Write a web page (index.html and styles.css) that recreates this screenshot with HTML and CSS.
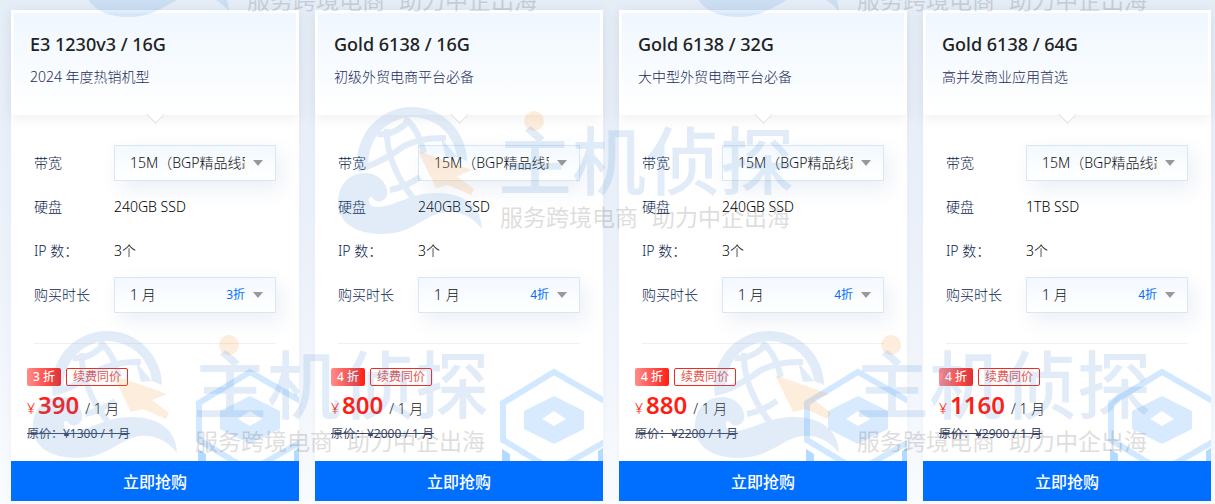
FILE: index.html
```html
<!DOCTYPE html>
<html lang="zh-CN">
<head>
    <meta charset="UTF-8">
    <meta name="viewport" content="width=device-width, initial-scale=1.0">
    <title>服务器特惠</title>
    <link rel="stylesheet" href="styles.css">
</head>
<body>
    <main class="plans" id="plans"></main>
    <div class="marks" id="marks" aria-hidden="true"></div>

    <script>
        const plans = [
            { name: 'E3 1230v3 / 16G', desc: '2024 年度热销机型', disk: '240GB SSD', off: 3, price: 390, old: 1300 },
            { name: 'Gold 6138 / 16G', desc: '初级外贸电商平台必备', disk: '240GB SSD', off: 4, price: 800, old: 2000 },
            { name: 'Gold 6138 / 32G', desc: '大中型外贸电商平台必备', disk: '240GB SSD', off: 4, price: 880, old: 2200 },
            { name: 'Gold 6138 / 64G', desc: '高并发商业应用首选', disk: '1TB SSD', off: 4, price: 1160, old: 2900 }
        ];

        document.getElementById('plans').innerHTML = plans.map((p, i) => `
            <section class="plan">
                <header class="plan-head">
                    <h2>${p.name}</h2>
                    <p>${p.desc}</p>
                </header>
                <div class="plan-body">
                    <div class="row">
                        <label for="band${i}">带宽</label>
                        <div class="select">
                            <select id="band${i}"><option>15M（BGP精品线路）</option></select>
                        </div>
                    </div>
                    <div class="row"><span class="name">硬盘</span><span class="value">${p.disk}</span></div>
                    <div class="row"><span class="name">IP 数：</span><span class="value">3个</span></div>
                    <div class="row">
                        <label for="time${i}">购买时长</label>
                        <div class="select">
                            <select id="time${i}"><option>1 月</option></select>
                            <span class="off">${p.off}折</span>
                        </div>
                    </div>
                </div>
                <div class="plan-price">
                    <svg class="cube" viewBox="0 0 104 93" aria-hidden="true">
                        <path d="M3 81V93H11V86ZM104 80L99 83V93H104Z" fill="#b3dbff"/>
                        <path d="M55 4L109 35V72L55 103L4 72V35Z" fill="none" stroke="#d2e8ff" stroke-width="6"/>
                        <path fill-rule="evenodd" d="M55 28L85 43V61L55 76L25 61V43ZM55 43L43 51L55 58L67 51Z" fill="#d8eafe"/>
                    </svg>
                    <div class="tags"><span class="tag tag-full">${p.off} 折</span><span class="tag">续费同价</span></div>
                    <div class="price"><i>¥</i><b>${p.price}</b><span>/ 1 月</span></div>
                    <del>原价：¥${p.old} / 1 月</del>
                </div>
                <button type="button" class="buy">立即抢购</button>
            </section>
        `).join('');

        // Brand mark: globe on a wave, name and slogan
        const marks = ['a', 'b', 'c', 'd', 'e'];
        document.getElementById('marks').innerHTML = marks.map(m => `
            <svg class="mark mark-${m}" viewBox="0 0 456 130">
                <g class="mark-blue">
                    <path d="M20 65A55 55 0 0 1 74 0A55 55 0 0 1 129 54L119 50A45 45 0 0 0 74 10A45 45 0 0 0 31 62Z"/>
                    <g class="mark-grid">
                        <path d="M40 27C50 28 62 24 72 12"/>
                        <path d="M28 60C44 54 58 45 66 39Q84 30 108 31"/>
                        <path d="M49 22C48 45 58 70 75 91"/>
                        <path d="M67 11C77 20 81 28 86 46"/>
                        <path d="M52 83C62 81 72 77 82 70"/>
                    </g>
                    <path d="M103 31L119 50L108 51Z"/>
                    <path d="M0 96C0 77 12 66 27 66C42 66 51 79 49 88C47 95 38 97 35 91C29 87 30 97 34 99C52 104 68 86 98 86C125 86 143 98 144 122C133 107 116 102 102 106C84 111 72 127 44 127C18 127 0 116 0 96Z"/>
                </g>
                <path class="mark-orange" d="M80 44L134 63L119 69L136 82L133 88L110 78L98 81Z"/>
                <circle class="mark-orange" cx="196" cy="14" r="10"/>
                <text class="mark-name" x="160" y="82">主机侦探</text>
                <text class="mark-slogan" x="162" y="119">服务跨境电商</text>
                <text class="mark-slogan" x="314" y="119">助力中企出海</text>
            </svg>
        `).join('');
    </script>
</body>
</html>
```
FILE: styles.css
```css
* {
    box-sizing: border-box;
}
body {
    position: relative;
    margin: 0;
    overflow-x: hidden;
    font-family: "Noto Sans", "Noto Sans CJK SC", sans-serif;
    font-size: 14px;
    color: #222;
    background: linear-gradient(#e5edf7, #edf2f9 50%, #fafcff);
}
.plans {
    display: grid;
    grid-template-columns: repeat(4, 1fr);
    gap: 16px;
    padding: 10px 4px 3px 11px;
}
.plan {
    display: flex;
    flex-direction: column;
    background: #fff;
    box-shadow: 0 0 12px rgba(120, 150, 210, 0.06);
}
.plan-head {
    position: relative;
    height: 105px;
    padding: 17px 16px;
    border: 3px solid #fff;
    background: linear-gradient(#eff7ff, #fff);
    box-shadow: 0 4px 14px rgba(0, 0, 0, 0.06);
}
.plan-head::after {
    content: "";
    position: absolute;
    left: 50%;
    bottom: -9px;
    width: 12px;
    height: 12px;
    margin-left: -6px;
    background: #fff;
    border: solid #dfe2e6;
    border-width: 0 1px 1px 0;
    transform: rotate(45deg);
}
.plan-head h2 {
    margin: 0;
    font-size: 18px;
    font-weight: 500;
    line-height: 28px;
}
.plan-head p {
    margin: 9px 0 0;
    line-height: 20px;
    font-weight: 300;
    color: #1c2b58;
}
.plan-body {
    margin: 0 23px;
    padding: 26px 0;
    border-bottom: 1px solid #eef0f2;
}
.row {
    display: flex;
    align-items: center;
    height: 44px;
    font-weight: 300;
    color: #000;
}
.row label,
.row .name {
    flex: none;
    width: 80px;
    padding-bottom: 2px;
    color: #0c1c4a;
}
.row .value {
    padding-bottom: 2px;
}
.select {
    position: relative;
    flex: 1;
    min-width: 0;
    height: 36px;
    box-shadow: 6px 8px 20px rgba(55, 99, 170, 0.1);
}
.select::after {
    content: "";
    position: absolute;
    right: 13px;
    top: 15px;
    border: solid transparent;
    border-width: 6px 5px 0;
    border-top-color: #999;
}
.select select {
    display: block;
    width: 100%;
    height: 100%;
    padding: 0 30px 2px 15px;
    border: 1px solid #d9e7f5;
    border-radius: 0;
    background: linear-gradient(#f3f9ff, #fff);
    font: inherit;
    color: #111;
    appearance: none;
}
.off {
    position: absolute;
    right: 31px;
    top: 8px;
    font-size: 12px;
    font-weight: 400;
    line-height: 20px;
    color: #006eff;
}
.plan-price {
    position: relative;
    height: 117px;
    padding: 24px 16px 0;
}
.cube {
    position: absolute;
    right: 0;
    bottom: 0;
    width: 104px;
    height: 93px;
}
.tags {
    display: flex;
    gap: 5px;
    margin-bottom: 5px;
}
.tag {
    padding: 0 6px;
    border: 1px solid #f22a20;
    border-radius: 2px;
    font-size: 12px;
    line-height: 16px;
    color: #e8554e;
}
.tag-full {
    padding: 0 5px;
    border-color: transparent;
    font-weight: 500;
    color: #fff;
    background: linear-gradient(90deg, #ff8c8c, #ff1e14) border-box;
}
.price {
    position: relative;
    display: flex;
    align-items: baseline;
    line-height: 28px;
    font-weight: 300;
}
.price i {
    width: 11px;
    font-style: normal;
    color: #ff1e14;
}
.price b {
    margin-right: 6px;
    font-size: 24px;
    font-weight: 600;
    color: #ff1e14;
}
.plan-price del {
    position: relative;
    display: block;
    margin-top: 1px;
    font-size: 12px;
    line-height: 20px;
    color: #3d4866;
}
.buy {
    height: 40px;
    padding: 0;
    border: 0;
    font: inherit;
    font-size: 16px;
    font-weight: 500;
    color: #fff;
    background: #006eff;
    cursor: pointer;
}
/* brand marks scattered over the page */
.marks {
    position: absolute;
    inset: 0;
    overflow: hidden;
    pointer-events: none;
}
.mark {
    position: absolute;
    width: 456px;
    height: 130px;
}
.mark-a { left: 85px; top: -110px; }
.mark-b { left: 695px; top: -110px; }
.mark-c { left: 338px; top: 107px; }
.mark-d { left: 33px; top: 331px; }
.mark-e { left: 695px; top: 331px; }
.mark-blue {
    fill: #4a90d9;
    opacity: 0.16;
}
.mark-grid {
    fill: none;
    stroke: #4a90d9;
    stroke-width: 6px;
}
.mark-orange {
    fill: #f59a42;
    opacity: 0.18;
}
.mark-name {
    font-family: "Noto Sans CJK SC", sans-serif;
    font-size: 74px;
    font-weight: 500;
    fill: #4a90d9;
    opacity: 0.16;
}
.mark-slogan {
    font-family: "Noto Sans CJK SC", sans-serif;
    font-size: 23px;
    fill: #000;
    opacity: 0.13;
}
```
